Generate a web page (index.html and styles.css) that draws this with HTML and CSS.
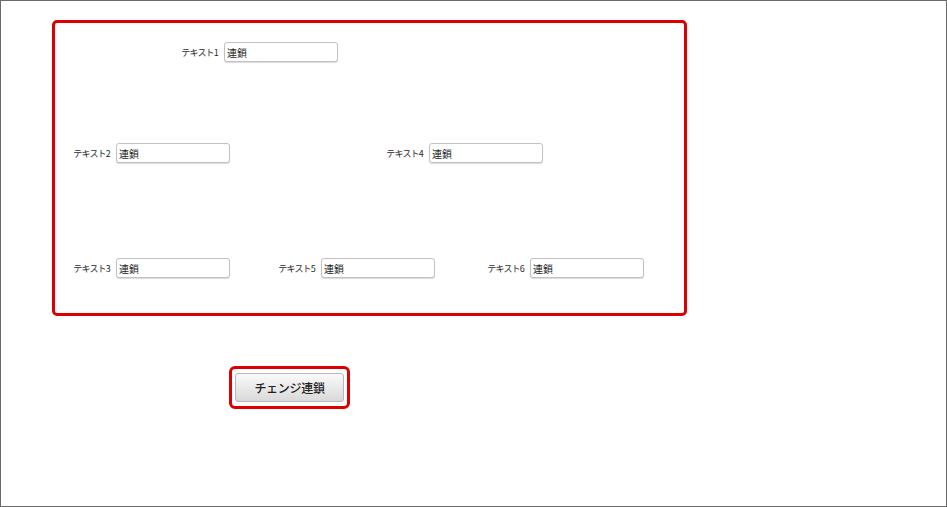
FILE: index.html
```html
<!DOCTYPE html>
<html lang="ja">
<head>
<meta charset="utf-8">
<title>チェンジ連鎖</title>
<link rel="stylesheet" href="styles.css">
</head>
<body>
<div class="frame">
  <div class="panel">
    <div class="row row1">
      <label class="field"><span class="lbl">テキスト1</span><input class="txt" type="text" value="連鎖"></label>
    </div>
    <div class="row row2">
      <label class="field"><span class="lbl">テキスト2</span><input class="txt" type="text" value="連鎖"></label>
      <label class="field f4"><span class="lbl">テキスト4</span><input class="txt" type="text" value="連鎖"></label>
    </div>
    <div class="row row3">
      <label class="field"><span class="lbl">テキスト3</span><input class="txt" type="text" value="連鎖"></label>
      <label class="field f5"><span class="lbl">テキスト5</span><input class="txt" type="text" value="連鎖"></label>
      <label class="field f6"><span class="lbl">テキスト6</span><input class="txt" type="text" value="連鎖"></label>
    </div>
  </div>
  <div class="btnwrap">
    <button class="btn" type="button">チェンジ連鎖</button>
  </div>
</div>
</body>
</html>
```
FILE: styles.css
```css
* { box-sizing: border-box; }
html, body { margin: 0; padding: 0; background: #fff; }
body { font-family: "Noto Sans CJK JP", "Noto Sans", sans-serif; color: #333; }

.frame {
  width: 947px;
  height: 507px;
  border: 1px solid #6a6a6a;
  padding: 19px 0 0 51px;
}

.panel {
  width: 635px;
  height: 296px;
  border: 3px solid #dd0000;
  border-radius: 5px;
  display: flex;
  flex-direction: column;
}

.row { display: flex; align-items: center; height: 20px; }
.row1 { margin-top: 19px; padding-left: 123px; }
.row2 { margin-top: 81px; padding-left: 15px; }
.row3 { margin-top: 95px; padding-left: 15px; }
.f4 { margin-left: 153px; }
.f5 { margin-left: 45px; }
.f6 { margin-left: 49px; }

.field { display: flex; align-items: center; gap: 6px; }
.lbl {
  width: 40px;
  text-align: right;
  font-size: 9px;
  letter-spacing: -0.8px;
  color: #2a2a2a;
  white-space: nowrap;
}
.txt {
  width: 114px;
  height: 20px;
  margin: 0;
  border: 1px solid #c2c2c2;
  border-radius: 3px;
  box-shadow: 0 1px 1px rgba(0,0,0,0.15);
  padding: 0 2px;
  font-family: "Noto Sans CJK JP", sans-serif;
  font-size: 10px;
  color: #222;
  background: #fff;
}

.btnwrap {
  display: inline-flex;
  margin: 50px 0 0 177px;
  padding: 4px 3px;
  border: 3px solid #dd0000;
  border-radius: 6px;
}
.btn {
  width: 109px;
  height: 29px;
  margin: 0;
  border: 1px solid #b8b8b8;
  border-radius: 3px;
  background: linear-gradient(#fafafa, #d9d9d9);
  font-family: "Noto Sans CJK JP", sans-serif;
  font-size: 12px;
  font-weight: 500;
  letter-spacing: -0.3px;
  color: #222;
  padding: 0;
}
```
